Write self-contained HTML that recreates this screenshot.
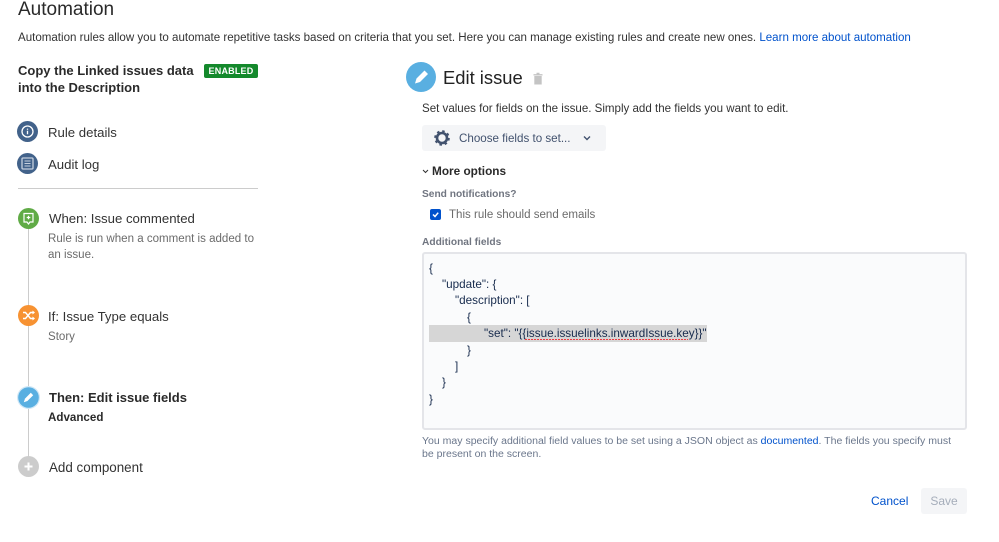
<!DOCTYPE html>
<html><head><meta charset="utf-8">
<style>
html,body{margin:0;padding:0;background:#fff}
body{width:999px;height:542px;position:relative;overflow:hidden;font-family:"Liberation Sans",Arial,sans-serif;color:#172b4d;filter:blur(.3px)}
.t{position:absolute;white-space:nowrap;line-height:16px}
.a{position:absolute}
.b{font-weight:bold}
svg{position:absolute;overflow:visible}
</style></head><body>
<div class="t" style="left:18px;top:-1px;font-size:19px;line-height:22px;color:#2a2a2a">Automation</div>
<div class="t" style="left:18px;top:30px;font-size:11.56px;color:#333">Automation rules allow you to automate repetitive tasks based on criteria that you set. Here you can manage existing rules and create new ones. <span style="color:#0052cc">Learn more about automation</span></div>
<div class="t b" style="left:18px;top:62px;font-size:13px;line-height:17px;color:#2a2a2a">Copy the Linked issues data<br>into the Description</div>
<div class="a" style="left:204px;top:64px;width:54px;height:14px;background:#14892c;border-radius:2px;color:#fff;font-size:9px;font-weight:bold;line-height:15px;text-align:center;letter-spacing:.2px">ENABLED</div>

<svg style="left:17px;top:121px" width="21" height="21"><circle cx="10.5" cy="10.5" r="10.5" fill="#42628a"/><circle cx="10.5" cy="10.5" r="5.5" fill="none" stroke="#fff" stroke-width="1.3"/><path d="M10.5 7.6v1.2M10.5 9.8v3.4" stroke="#fff" stroke-width="1.3"/></svg>
<div class="t" style="left:48px;top:125px;font-size:13.2px;color:#333">Rule details</div>
<svg style="left:17px;top:153px" width="21" height="21"><circle cx="10.5" cy="10.5" r="10.5" fill="#42628a"/><rect x="5" y="5" width="11" height="11" rx="1" fill="none" stroke="#c5d0de" stroke-width="1.3"/><path d="M7.5 8h6M7.5 10.5h6M7.5 13h6" stroke="#c5d0de"/></svg>
<div class="t" style="left:48px;top:157px;font-size:13.2px;color:#333">Audit log</div>
<div class="a" style="left:18px;top:188px;width:240px;height:1px;background:#ccc"></div>

<div class="a" style="left:28px;top:225px;width:1px;height:235px;background:#ccc"></div>
<svg style="left:18px;top:208px" width="21" height="21"><circle cx="10.5" cy="10.5" r="10.5" fill="#60ab46"/><path d="M6 5.5h9v8.5h-3l-1.500 2-1.500-2H6z" fill="none" stroke="#fff" stroke-width="1.2"/><path d="M10.5 7.8v3.5M8.7 9.5h3.600" stroke="#fff" stroke-width="1.2"/></svg>
<div class="t" style="left:49px;top:210.5px;font-size:13.2px;color:#333">When: Issue commented</div>
<div class="t" style="left:48px;top:231px;font-size:11.55px;line-height:16px;color:#6b6b6b">Rule is run when a comment is added to<br>an issue.</div>

<svg style="left:18px;top:305px" width="21" height="21"><circle cx="10.5" cy="10.5" r="10.5" fill="#f79232"/><path d="M5 7.5h2.5l5 6H15M5 13.5h2.5l5-6H15" fill="none" stroke="#fff" stroke-width="1.4"/><path d="M14.5 5.5l2.500 2-2.500 2zM14.500 11.500l2.500 2-2.500 2z" fill="#fff"/></svg>
<div class="t" style="left:48px;top:308.5px;font-size:13.2px;color:#333">If: Issue Type equals</div>
<div class="t" style="left:48px;top:328.5px;font-size:11.55px;color:#6b6b6b">Story</div>

<svg style="left:18px;top:387px" width="21" height="21"><circle cx="10.5" cy="10.5" r="11.5" fill="#cfe7f6"/><circle cx="10.5" cy="10.5" r="10.3" fill="#59afe1"/><path d="M5.8 15.2l1.2-3.600 5.800-5.800 2.400 2.400-5.800 5.800z" fill="#fff"/></svg>
<div class="t b" style="left:49px;top:390px;font-size:13px;color:#2a2a2a">Then: Edit issue fields</div>
<div class="t b" style="left:48px;top:410px;font-size:11.6px;color:#2a2a2a">Advanced</div>

<svg style="left:18px;top:456px" width="21" height="21"><circle cx="10.5" cy="10.5" r="10.5" fill="#ccc"/><path d="M10.5 6.500v8M6.500 10.500h8" stroke="#fff" stroke-width="2"/></svg>
<div class="t" style="left:49px;top:459.5px;font-size:13.4px;color:#333">Add component</div>

<svg style="left:406px;top:62px" width="30" height="30"><circle cx="15" cy="15" r="15" fill="#59afe1"/><path d="M9 21.500l1.500-5 8-8 3.500 3.500-8 8z" fill="#fff"/></svg>
<div class="t" style="left:443px;top:65px;font-size:18.4px;line-height:26px;color:#222">Edit issue</div>
<svg style="left:533px;top:72px" width="10" height="13"><path d="M3.500 1.500h3M.5 2.800h9" stroke="#c4c4c4" stroke-width="1.400"/><path d="M1.300 4h7.400v8.500H1.300z" fill="#c4c4c4"/></svg>
<div class="t" style="left:422px;top:100.5px;font-size:11.56px;color:#333">Set values for fields on the issue. Simply add the fields you want to edit.</div>

<div class="a" style="left:422px;top:125px;width:184px;height:26px;background:#f4f5f7;border-radius:3px"></div>
<svg style="left:434px;top:130px" width="16" height="16"><circle cx="8" cy="8" r="5" fill="none" stroke="#42526e" stroke-width="2.600"/><circle cx="8" cy="8" r="6.800" fill="none" stroke="#42526e" stroke-width="2" stroke-dasharray="2.500 2.840"/></svg>
<div class="t" style="left:459px;top:130.5px;font-size:11.6px;color:#42526e">Choose fields to set...</div>
<svg style="left:583px;top:135px" width="8" height="6"><path d="M1 1.500l3 3 3-3" fill="none" stroke="#42526e" stroke-width="1.400"/></svg>

<svg style="left:422px;top:169px" width="7" height="5"><path d="M1 1l2.500 2.500L6 1" fill="none" stroke="#333" stroke-width="1"/></svg>
<div class="t b" style="left:432px;top:163px;font-size:11.8px;color:#2a2a2a">More options</div>
<div class="t b" style="left:422px;top:186.5px;font-size:10.2px;color:#707580">Send notifications?</div>
<div class="a" style="left:430px;top:209px;width:11px;height:11px;background:#0052cc;border-radius:2px"></div>
<svg style="left:430px;top:209px" width="11" height="11"><path d="M3 5.500l2 2 3.200-3.800" fill="none" stroke="#fff" stroke-width="1.500"/></svg>
<div class="t" style="left:449px;top:207px;font-size:11.55px;color:#6b6b6b">This rule should send emails</div>
<div class="t b" style="left:422px;top:234.5px;font-size:10.2px;color:#707580">Additional fields</div>

<div class="a" style="left:422px;top:252px;width:541px;height:174px;background:#fafbfc;border:2px solid #e4e5e9;border-radius:3px"></div>
<div class="a" style="left:429px;top:325px;width:278px;height:17px;background:#d6d6d6"></div>
<div class="t" style="left:429px;top:260.5px;font-size:11.7px;line-height:16.4px;color:#172b4d">{<br><span style="margin-left:13px">"update": {</span><br><span style="margin-left:26px">"description": [</span><br><span style="margin-left:38px">{</span><br><span style="margin-left:55px">"set": "{{issue.issuelinks.inwardIssue.key}}"</span><br><span style="margin-left:38px">}</span><br><span style="margin-left:26px">]</span><br><span style="margin-left:13px">}</span><br>}</div>
<div class="a" style="left:525px;top:339px;width:163px;height:1px;background:repeating-linear-gradient(90deg,#f03a40 0 2px,transparent 2px 3px)"></div>

<div class="t" style="left:422px;top:434.5px;font-size:10.53px;line-height:13px;color:#6b778c">You may specify additional field values to be set using a JSON object as <span style="color:#0052cc">documented</span>. The fields you specify must<br>be present on the screen.</div>

<div class="t" style="left:871px;top:493px;font-size:12px;color:#0052cc">Cancel</div>
<div class="a" style="left:921px;top:488px;width:46px;height:26px;background:#f4f5f7;border-radius:3px;font-size:12px;line-height:26px;text-align:center;color:#a5adba">Save</div>
</body></html>
